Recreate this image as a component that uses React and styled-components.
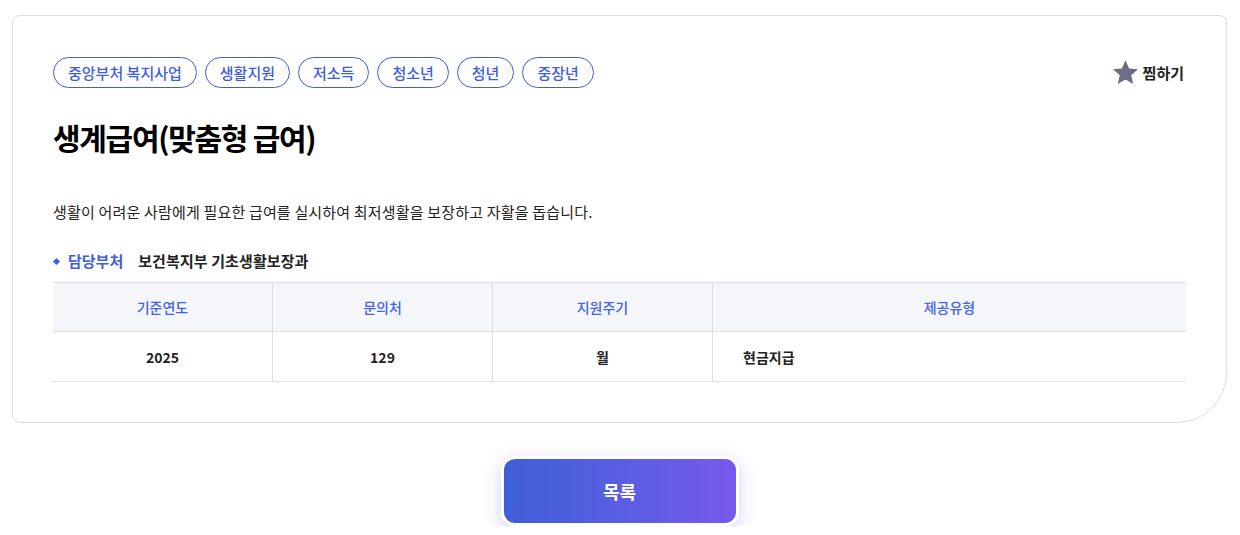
import React from 'react';
import styled, { createGlobalStyle } from 'styled-components';

const GlobalStyle = createGlobalStyle`
  body {
    margin: 0;
    background: #fff;
    font-family: "Noto Sans CJK KR", "Noto Sans", sans-serif;
    color: #111;
  }
`;

const Page = styled.div`
  padding: 15px 13px 0 12px;
  display: flex;
  flex-direction: column;
  align-items: stretch;
`;

const Card = styled.section`
  border: 1px solid #dedede;
  border-radius: 8px 8px 50px 8px;
  padding: 41px 40px 40px;
  background: #fff;
`;

const TopRow = styled.div`
  display: flex;
  justify-content: space-between;
  align-items: center;
`;

const Tags = styled.div`
  display: flex;
  gap: 8px;
`;

const Tag = styled.span`
  display: inline-flex;
  align-items: center;
  height: 31px;
  box-sizing: border-box;
  padding: 0 14px;
  border: 1px solid #3d5ee0;
  border-radius: 16px;
  color: #3d5ee0;
  font-size: 15px;
  font-weight: 500;
`;

const Bookmark = styled.button`
  display: flex;
  align-items: center;
  gap: 4px;
  border: 0;
  background: none;
  padding: 0;
  margin-right: 2px;
  font-family: inherit;
  font-size: 15px;
  font-weight: 700;
  color: #222;
  cursor: pointer;
`;

const Title = styled.h1`
  margin: 30px 0 0;
  font-size: 30px;
  line-height: 39px;
  font-weight: 700;
  letter-spacing: -1.3px;
  color: #000;
`;

const Desc = styled.p`
  margin: 44px 0 0;
  font-size: 15px;
  line-height: 22px;
  letter-spacing: 0.18px;
  color: #222;
`;

const Dept = styled.div`
  margin-top: 27px;
  display: flex;
  align-items: center;
  font-size: 15px;
  line-height: 22px;
  font-weight: 700;
`;

const Bullet = styled.i`
  width: 5px;
  height: 5px;
  background: #3d5ee0;
  transform: rotate(45deg);
  margin: 0 9px 0 1px;
`;

const DeptLabel = styled.span`
  color: #3d5ee0;
  margin-right: 15px;
`;

const DeptValue = styled.span`
  color: #222;
  letter-spacing: 0.1px;
`;

const Table = styled.div`
  margin-top: 10px;
  display: grid;
  grid-template-columns: 219px 220px 220px 1fr;
  border-top: 1px solid #dedede;
`;

const Cell = styled.div`
  display: flex;
  align-items: center;
  justify-content: ${p => (p.$left ? 'flex-start' : 'center')};
  padding-left: ${p => (p.$left ? '30px' : '0')};
  height: ${p => (p.$head ? '48px' : '49px')};
  border-bottom: 1px solid #dedede;
  border-left: ${p => (p.$first ? '0' : '1px solid #dedede')};
  background: ${p => (p.$head ? '#f5f6fa' : '#fff')};
  color: ${p => (p.$head ? '#4263eb' : '#222')};
  font-size: 14px;
  font-weight: ${p => (p.$head ? 500 : 700)};
`;

const Actions = styled.div`
  display: flex;
  justify-content: center;
  margin-top: 33px;
`;

const ListButton = styled.button`
  width: 238px;
  height: 70px;
  border: 3px solid #fff;
  border-radius: 14px;
  background: linear-gradient(90deg, #3e5fd7 0%, #5c5ee3 55%, #7759eb 100%);
  box-shadow: 0 6px 18px rgba(100, 95, 220, 0.28);
  color: #fff;
  font-family: inherit;
  font-size: 18px;
  font-weight: 700;
  cursor: pointer;
`;

const Star = () => (
  <svg width="27" height="27" viewBox="0 0 24 24">
    <path
      fill="#6b6e84"
      d="M12 1.2l3.2 7.3 7.9.7-6 5.3 1.8 7.8L12 18.2l-6.9 4.1 1.8-7.8-6-5.3 7.9-.7z"
    />
  </svg>
);

const tags = ['중앙부처 복지사업', '생활지원', '저소득', '청소년', '청년', '중장년'];
const heads = ['기준연도', '문의처', '지원주기', '제공유형'];
const values = ['2025', '129', '월', '현금지급'];

export default function App() {
  return (
    <Page>
      <GlobalStyle />
      <Card>
        <TopRow>
          <Tags>
            {tags.map(t => (
              <Tag key={t}>{t}</Tag>
            ))}
          </Tags>
          <Bookmark>
            <Star />
            찜하기
          </Bookmark>
        </TopRow>
        <Title>생계급여(맞춤형 급여)</Title>
        <Desc>생활이 어려운 사람에게 필요한 급여를 실시하여 최저생활을 보장하고 자활을 돕습니다.</Desc>
        <Dept>
          <Bullet />
          <DeptLabel>담당부처</DeptLabel>
          <DeptValue>보건복지부 기초생활보장과</DeptValue>
        </Dept>
        <Table>
          {heads.map((h, i) => (
            <Cell key={h} $head $first={i === 0}>
              {h}
            </Cell>
          ))}
          {values.map((v, i) => (
            <Cell key={v} $first={i === 0} $left={i === 3}>
              {v}
            </Cell>
          ))}
        </Table>
      </Card>
      <Actions>
        <ListButton>목록</ListButton>
      </Actions>
    </Page>
  );
}
